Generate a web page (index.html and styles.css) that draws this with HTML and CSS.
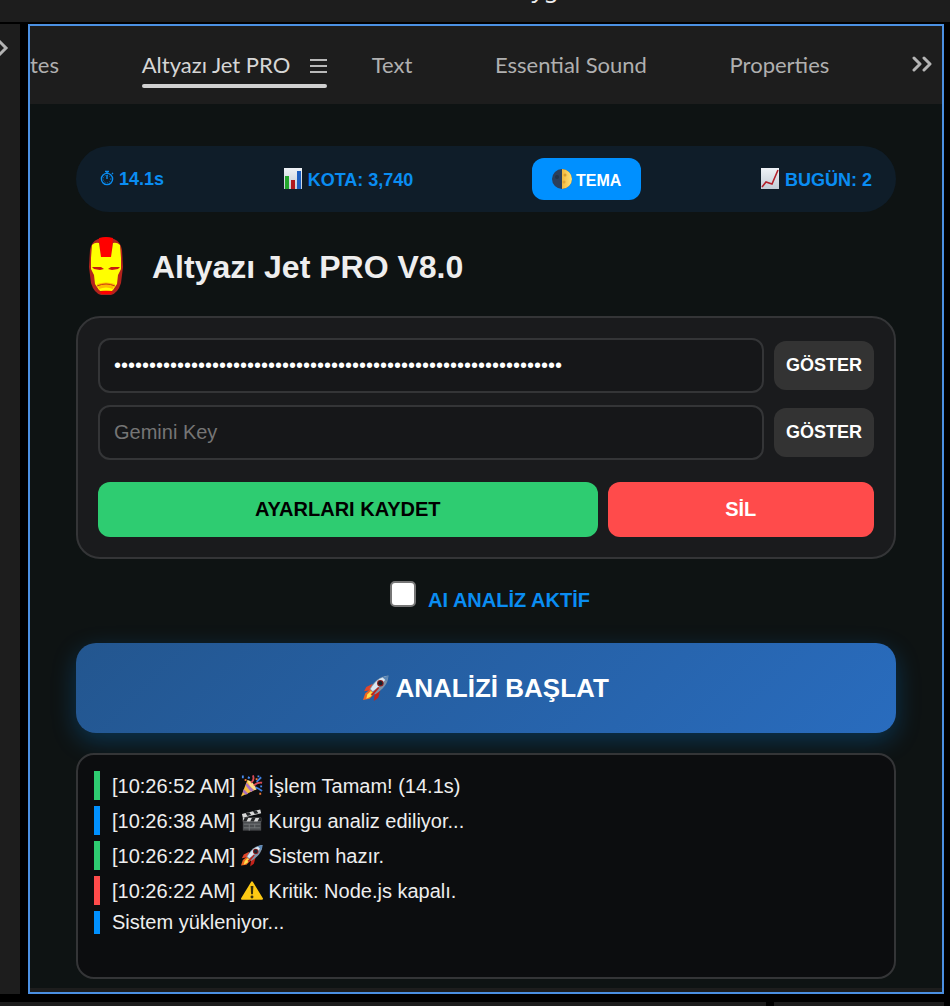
FILE: index.html
```html
<!DOCTYPE html>
<html lang="tr">

<head>
    <meta charset="UTF-8">
    <meta name="viewport" content="width=device-width, initial-scale=1.0">
    <title>Altyazı Jet PRO</title>
    <link rel="stylesheet" href="styles.css">
</head>

<body>

    <!-- Shared icons -->
    <svg class="icon-defs" aria-hidden="true">
        <linearGradient id="moonGold">
            <stop offset="0" stop-color="#f3b93c" />
            <stop offset="1" stop-color="#ffe37a" />
        </linearGradient>
        <linearGradient id="paper" x2="0" y2="1">
            <stop offset="0" stop-color="#eef2f6" />
            <stop offset="1" stop-color="#c3ccd6" />
        </linearGradient>
        <symbol id="rocket" viewBox="0 0 24 24">
            <path d="M9 8 3 11 1 15l6-1z" fill="#e0452a" />
            <path d="M16 14l-2 7-4 3 1-7z" fill="#c4231b" />
            <path d="M7 13 2 17 0 23l6-1 5-5z" fill="#f1661f" />
            <path d="M7 15 4 18l-1 4 4-2 3-4z" fill="#ffe04d" />
            <path d="M23.500.5C16 1 11 5 6 13l5 5C19 13 23 8 23.500.5z" fill="#7e93a8" />
            <path d="M23 1C16 2 11 6 7 13l2 2C15 11 20 6 23 1z" fill="#dbe7f1" />
            <path d="M23.500.5 18 2l4 4z" fill="#5a86b6" />
            <circle cx="16" cy="7.500" r="3" fill="#8c1d1d" />
            <circle cx="16" cy="7.500" r="2" fill="#16222e" />
            <path d="M14 11 7 18l2 1 6-7z" fill="#bd2620" />
        </symbol>
    </svg>

    <div class="topbar"><span>yg</span></div>

    <div class="workspace">
        <div class="side-strip">
            <svg width="10" height="20" viewBox="0 0 10 20" fill="none" stroke="#b3b3b3" stroke-width="3">
                <path d="M-1 4 6 11l-7 7" />
            </svg>
        </div>

        <div class="panel">
            <nav class="tabs">
                <a class="tab" href="#">tes</a>
                <a class="tab active" href="#">Altyazı Jet PRO
                    <svg width="17" height="16" viewBox="0 0 17 16" stroke="#b9b9b9" stroke-width="2">
                        <path d="M0 2h17M0 8h17M0 14h17" />
                    </svg>
                </a>
                <a class="tab" href="#">Text</a>
                <a class="tab" href="#">Essential Sound</a>
                <a class="tab" href="#">Properties</a>
                <button class="more-tabs" type="button" aria-label="Diğer sekmeler">
                    <svg width="20" height="16" viewBox="0 0 20 16" fill="none" stroke="#b5b5b5" stroke-width="3"
                        stroke-linecap="round" stroke-linejoin="round">
                        <path d="M2 2l6 6-6 6M12 2l6 6-6 6" />
                    </svg>
                </button>
            </nav>

            <main class="content">
                <div class="status-bar">
                    <span><svg class="stopwatch" viewBox="0 0 14 16" fill="none" stroke="#0a8df2" stroke-width="1.400">
                            <circle cx="7" cy="9" r="5.600" />
                            <path d="M7 9V5M5 1.500h4M7 1.500v2M12 3l1 1" />
                            <circle cx="7" cy="9" r="3.800" stroke-width=".8" stroke-dasharray="1 1.500" />
                        </svg> 14.1s</span>
                    <span><svg class="emoji" viewBox="0 0 20 22">
                            <rect x="1" y="0" width="18" height="21" fill="url(#paper)" />
                            <rect x="2" y="8" width="4" height="13" fill="#21a52b" />
                            <rect x="8" y="12" width="4" height="9" fill="#b0181d" />
                            <rect x="14" y="3" width="4" height="18" fill="#1d5fc0" />
                        </svg> KOTA: 3,740</span>
                    <button class="btn-theme" type="button"><svg class="emoji" viewBox="0 0 20 20">
                            <circle cx="10" cy="10" r="10" fill="#2b3f5c" />
                            <path d="M10 0a10 10 0 0 1 0 20z" fill="url(#moonGold)" />
                            <circle cx="13" cy="6" r="1.500" fill="#d99d2b" />
                            <circle cx="12" cy="13" r="1.500" fill="#dfa738" />
                            <circle cx="5" cy="8" r="2" fill="#223349" />
                        </svg>TEMA</button>
                    <span><svg class="emoji" viewBox="0 0 20 22">
                            <rect x="1" y="0" width="18" height="21" fill="url(#paper)" />
                            <path d="M2 19l4-5 6 2 6-14" fill="none" stroke="#b3202a" stroke-width="1.600" />
                        </svg> BUGÜN: 2</span>
                </div>

                <header class="title">
                    <svg class="mask" viewBox="0 0 36 58">
                        <path d="M10 2Q18-1 26 2 33 5 34 13L35 30 33 46Q30 56 23 58H13Q6 56 3 46L1 30 2 13Q3 5 10 2z"
                            fill="#b3231d" />
                        <path d="M11 1q7-2 14 0l-2 20H13z" fill="#f00" />
                        <path d="M4 8q3-3 7-2l2 14h10L25 6q4-1 7 2l1 13 0 11-3 6-1 9-4 6H11l-4-6-1-9-3-6 0-11z" fill="#ff0" />
                        <path d="M4 30l9 0 3 2-4 1-6-1zM32 30l-9 0-3 2 4 1 6-1z" fill="#c91a10" />
                        <path d="M9 47q9-3 18 0l-3 7H12z" fill="#fb0" />
                        <path d="M9 49q9-4 18 0" fill="none" stroke="#c93a14" />
                        <path d="M11 52q7-3 14 0l-1 2q-6-2-12 0z" fill="#ff0" />
                        <path d="M11 55q7-2 14 0l-3 2h-8z" fill="#f00" />
                    </svg>
                    <h1>Altyazı Jet PRO V8.0</h1>
                </header>

                <form class="card">
                    <div class="key-row">
                        <input type="password" id="apiKey" aria-label="API Key"
                            value="0000000000000000000000000000000000000000000000000000000000000000">
                        <button class="btn-show" type="button">GÖSTER</button>
                    </div>
                    <div class="key-row">
                        <input type="password" id="geminiKey" aria-label="Gemini Key" placeholder="Gemini Key">
                        <button class="btn-show" type="button">GÖSTER</button>
                    </div>
                    <div class="actions">
                        <button class="btn-save" type="button">AYARLARI KAYDET</button>
                        <button class="btn-delete" type="button">SİL</button>
                    </div>
                </form>

                <div class="ai-option">
                    <input type="checkbox" id="aiActive">
                    <label for="aiActive">AI ANALİZ AKTİF</label>
                </div>

                <button class="btn-start" type="button"><svg class="rocket-big"><use href="#rocket" /></svg> ANALİZİ BAŞLAT</button>

                <div class="log">
                    <div class="log-item success">[10:26:52 AM] <svg class="log-icon" viewBox="0 0 24 24">
                            <path d="M7 6 0 24l17-8z" fill="#f6bd3d" />
                            <path d="M6 9 14 17l-3 2-6-7zM3 16l5 5-3 1-3-3z" fill="#a970c0" />
                            <path d="M7 6q7 2 10 10l-2 1Q9 14 7 6z" fill="#ffe08a" />
                            <path d="M11 9q4-3 2-8M14 12q4-4 9-3" fill="none" stroke="#d84b57" stroke-width="2" />
                            <path d="M16 14q3 1 7 4M17 8l5-5" fill="none" stroke="#3d7ee0" stroke-width="2" />
                            <path d="M1 1h2v3H1zM8 2l2 1-1 2-2-1zM18 1h2v2h-2zM21 12h2v2h-2z" fill="#4a8cf0" />
                            <path d="M4 5h2v2H4zM16 4h2v2h-2zM20 20h2v2h-2z" fill="#ef7733" />
                        </svg> İşlem Tamam! (14.1s)</div>
                    <div class="log-item info">[10:26:38 AM] <svg class="log-icon" viewBox="0 0 24 24">
                            <path d="M2 11h20v12H2z" fill="#4a4d50" />
                            <path d="M1 5 21 0l1 4L2 9zM2 9h20v4H2z" fill="#d8d8d8" />
                            <path d="M5 4l4-1 2 3-4 1zM13 2l4-1 2 3-4 1zM4 9h4l-2 4H2zM12 9h4l-2 4h-4zM20 9h2v4h-4z"
                                fill="#232527" />
                            <path d="M3 16h18M3 20h18M9 16v7M15 16v4" stroke="#76797c" />
                        </svg> Kurgu analiz ediliyor...</div>
                    <div class="log-item success">[10:26:22 AM] <svg class="log-icon"><use href="#rocket" /></svg> Sistem hazır.</div>
                    <div class="log-item error">[10:26:22 AM] <svg class="log-icon" viewBox="0 0 24 24">
                            <path d="M12 3 23 21H1z" fill="#fdc914" stroke="#fdc914" stroke-width="2" stroke-linejoin="round" />
                            <path d="M10.500 7h3l-.5 9h-2z" fill="#39300d" />
                            <circle cx="12" cy="19" r="1.600" fill="#39300d" />
                        </svg> Kritik: Node.js kapalı.</div>
                    <div class="log-item info">Sistem yükleniyor...</div>
                </div>
            </main>
        </div>
    </div>

    <div class="bottom-bar">
        <div></div>
        <div></div>
    </div>

</body>

</html>
```
FILE: styles.css
```css
* {
    box-sizing: border-box;
}

body {
    margin: 0;
    min-height: 100vh;
    display: flex;
    flex-direction: column;
    background: #000;
    color: #eee;
    font-family: "Liberation Sans", Arial, sans-serif;
}

button {
    border: none;
    color: white;
    font-family: inherit;
    font-weight: bold;
    cursor: pointer;
}

.icon-defs {
    position: absolute;
    width: 0;
    height: 0;
}

/* Host application frame */
.topbar {
    height: 22px;
    padding-left: 140px;
    overflow: hidden;
    background: #1d1d1d;
    text-align: center;
    font: 24px/24px "Noto Sans", sans-serif;
}

.topbar span {
    display: block;
    margin-top: -24px;
}

.workspace {
    flex: 1;
    display: flex;
    gap: 8px;
    padding: 2px 6px 8px 0;
}

.side-strip {
    width: 20px;
    padding-top: 13px;
    background: #1d1d1d;
}

.panel {
    flex: 1;
    min-width: 0;
    display: flex;
    flex-direction: column;
    padding-bottom: 4px;
    border: 2px solid #4b90e2;
    background: #1d1d1d;
}

.tabs {
    height: 78px;
    display: flex;
    align-items: center;
    justify-content: space-between;
    padding-right: 10px;
    overflow: hidden;
}

.tab {
    padding: 6px 38px 6px 0;
    color: #b0b0b0;
    font: 22px/34px Lato, sans-serif;
    text-decoration: none;
    white-space: nowrap;
}

.tab.active {
    padding-right: 0;
    color: #d6d6d6;
}

/* underline with rounded ends */
.tab.active::after {
    content: "";
    display: block;
    height: 4px;
    margin: 2px 0 -6px;
    border-radius: 2px;
    background: #d0d0d0;
}

.tab.active svg {
    margin-left: 14px;
    vertical-align: -1px;
}

.more-tabs {
    padding: 0;
    background: none;
}

/* Plugin */
.content {
    flex: 1;
    display: flex;
    flex-direction: column;
    padding: 42px 46px 9px;
    background: #0e1313;
}

.status-bar {
    height: 66px;
    display: flex;
    align-items: center;
    justify-content: space-between;
    padding: 0 24px;
    border-radius: 33px;
    background: #0f1d29;
    color: #0a8df2;
    font-size: 18px;
    font-weight: bold;
}

.emoji {
    width: 20px;
    height: 22px;
    vertical-align: -4px;
}

.stopwatch {
    width: 14px;
    height: 16px;
    vertical-align: -1px;
}

.btn-theme {
    height: 42px;
    padding: 0 20px;
    border-radius: 12px;
    background: #0090ff;
    font-size: 16px;
}

.btn-theme .emoji {
    margin-right: 4px;
}

.title {
    display: flex;
    align-items: center;
    gap: 28px;
    height: 104px;
    padding: 4px 12px 0;
}

.mask {
    width: 36px;
    height: 58px;
}

h1 {
    margin: 0;
    padding-top: 2px;
    font-size: 32px;
}

.card {
    padding: 20px;
    border: 2px solid #343537;
    border-radius: 24px;
    background: #1a1b1d;
}

.key-row {
    display: flex;
    align-items: center;
    gap: 10px;
    margin-bottom: 12px;
}

.key-row input {
    flex: 1;
    min-width: 0;
    height: 55px;
    padding: 0 14px;
    border: 2px solid #343537;
    border-radius: 12px;
    background: #161719;
    color: white;
    font-family: inherit;
    font-size: 20px;
}

.key-row input::placeholder {
    color: #757575;
}

.btn-show {
    width: 100px;
    height: 49px;
    padding: 0;
    border-radius: 12px;
    background: #333;
    font-size: 18px;
}

.actions {
    display: grid;
    grid-template-columns: 15fr 8fr;
    gap: 10px;
    margin-top: 22px;
}

.actions button {
    height: 55px;
    border-radius: 12px;
    font-size: 20px;
}

.actions .btn-save {
    background: #2ecc71;
    color: black;
}

.actions .btn-delete {
    background: #ff4b4b;
}

.ai-option {
    display: flex;
    align-items: flex-start;
    justify-content: center;
    gap: 12px;
    margin: 22px 0 31px;
    padding-left: 8px;
    color: #0a8df2;
    font-size: 20px;
    font-weight: bold;
}

.ai-option input {
    appearance: none;
    width: 26px;
    height: 26px;
    margin: 0;
    border: 2px solid #767676;
    border-radius: 5px;
    background: white;
}

.ai-option input:checked {
    background: #0090ff;
}

.ai-option label {
    padding-top: 8px;
    line-height: 23px;
}

.btn-start {
    height: 90px;
    border-radius: 20px;
    background: linear-gradient(135deg, #23568f, #296cbe);
    box-shadow: 0 8px 24px rgba(0, 145, 255, 0.26);
    font-size: 26px;
}

.rocket-big {
    width: 26px;
    height: 26px;
    vertical-align: -4px;
}

.log {
    flex: 1;
    margin-top: 20px;
    padding: 16px;
    border: 2px solid #343537;
    border-radius: 18px;
    background: #0c0d0f;
    font-size: 20px;
}

.log-item {
    margin-bottom: 6px;
    padding-left: 12px;
    border-left: 6px solid #0090ff;
}

.log-item.success {
    border-color: #2ecc71;
}

.log-item.error {
    border-color: #ff4b4b;
}

.log-icon {
    width: 22px;
    height: 29px;
    vertical-align: -7px;
}

.bottom-bar {
    display: flex;
    gap: 8px;
    height: 4px;
    padding-right: 6px;
}

.bottom-bar div {
    flex: 9;
    background: #1d1d1d;
}

.bottom-bar div:last-child {
    flex: 2;
}
```
